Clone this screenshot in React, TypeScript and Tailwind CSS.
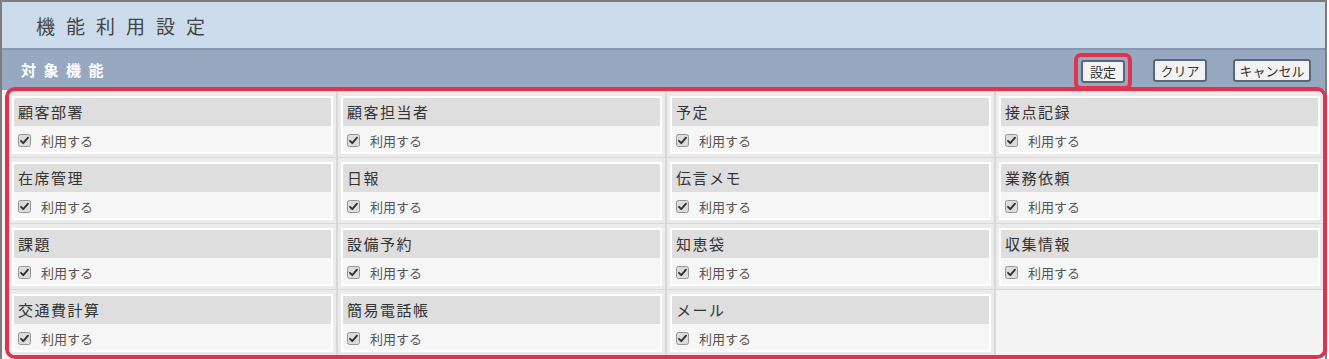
import React from "react";

const items = [
  "顧客部署", "顧客担当者", "予定", "接点記録",
  "在席管理", "日報", "伝言メモ", "業務依頼",
  "課題", "設備予約", "知恵袋", "収集情報",
  "交通費計算", "簡易電話帳", "メール", "",
];

function Check() {
  return (
    <svg width="13" height="13" viewBox="0 0 13 13" className="shrink-0">
      <rect x="0.5" y="0.5" width="12" height="12" rx="2" fill="#dcdcdc" stroke="#959595" />
      <path d="M3 6.8 L5.3 9.2 L10 3.6" fill="none" stroke="#2e2e2e" strokeWidth="1.8" strokeLinecap="round" strokeLinejoin="round" />
    </svg>
  );
}

function Cell({ name }: { name: string }) {
  if (!name) return <div className="h-[65px] bg-[#f4f4f4]" />;
  return (
    <div className="h-[65px] bg-[#ebebeb] px-[3px] pt-[4px] pb-[3px]">
      <div className="border-2 border-white">
        <div className="h-[28px] bg-[#dedede] pl-[4px] flex items-center text-[15px] tracking-[1.5px] text-[#333]">{name}</div>
        <div className="h-[26px] bg-[#f6f6f6] pl-[4px] pt-[3px] flex items-center gap-[10px]">
          <Check />
          <span className="text-[13px] text-[#555]">利用する</span>
        </div>
      </div>
    </div>
  );
}

export default function App() {
  return (
    <div
      className="w-[1329px] h-[359px] overflow-hidden bg-white"
      style={{ fontFamily: '"Noto Sans CJK JP", "Noto Sans", sans-serif' }}
    >
      <div className="w-[1327px] h-[400px] border-l-2 border-t-2 border-r-2 border-[#7d7d7d] bg-[#f4f4f4]">
        <div className="h-[46px] bg-[#cddcec] flex items-center pl-[34px] text-[19px] text-[#444] tracking-[0.58em] leading-none">
          機能利用設定
        </div>
        <div className="h-[2px] bg-[#8596ad]" />
        <div className="h-[40px] bg-[#97a9c0] flex items-center pl-[19px] pr-[14px]">
          <span className="text-[15px] font-bold text-white tracking-[0.5em]">対象機能</span>
          <div className="ml-auto flex items-center">
            <span className="border-[4px] border-[#e0334f] rounded-[7px] p-[3px] mt-[2px]">
              <button className="block w-[44px] h-[23px] bg-[#f2f2f2] border-2 border-[#56677d] rounded-[3px] text-[13px] text-[#333] leading-none">設定</button>
            </span>
            <button className="ml-[21px] w-[54px] h-[23px] bg-[#f2f2f2] border-2 border-[#56677d] rounded-[3px] text-[13px] text-[#333] leading-none">クリア</button>
            <button className="ml-[26px] w-[78px] h-[23px] bg-[#f2f2f2] border-2 border-[#56677d] rounded-[3px] text-[13px] text-[#333] leading-none">キャンセル</button>
          </div>
        </div>
        <div className="-mt-[3px] ml-[3px] mr-[-2px] border-[4px] border-[#e0334f] rounded-[10px] overflow-hidden bg-[#ebebeb]">
          <div className="grid grid-cols-4 gap-x-[2px] gap-y-[1px] bg-[#d8d8d8] pt-[1px]">
            {items.map((n, i) => (
              <Cell key={i} name={n} />
            ))}
          </div>
        </div>
      </div>
    </div>
  );
}
